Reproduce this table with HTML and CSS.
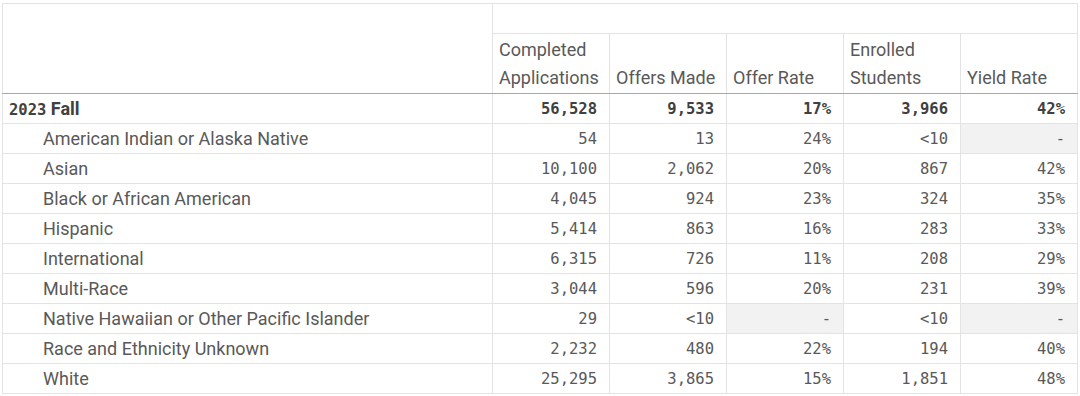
FILE: index.html
```html
<!DOCTYPE html>
<html lang="en">
<head>
    <meta charset="UTF-8">
    <title>Admissions by Race and Ethnicity</title>
    <link rel="stylesheet" href="styles.css">
</head>
<body>
    <table class="pivot">
        <colgroup>
            <col class="col-dim">
            <col class="col-num">
            <col class="col-num">
            <col class="col-num">
            <col class="col-num">
            <col class="col-num">
        </colgroup>
        <thead>
            <tr class="head-top">
                <th class="corner" rowspan="2"></th>
                <th class="head-span" colspan="5"></th>
            </tr>
            <tr class="head-measures">
                <th class="first-measure">Completed<br>Applications</th>
                <th>Offers Made</th>
                <th>Offer Rate</th>
                <th>Enrolled<br>Students</th>
                <th>Yield Rate</th>
            </tr>
        </thead>
        <tbody>
            <tr class="total">
                <td class="dim"><span class="num-font">2023</span> Fall</td>
                <td class="num first-measure">56,528</td>
                <td class="num">9,533</td>
                <td class="num">17%</td>
                <td class="num">3,966</td>
                <td class="num">42%</td>
            </tr>
            <tr>
                <td class="dim sub">American Indian or Alaska Native</td>
                <td class="num first-measure">54</td>
                <td class="num">13</td>
                <td class="num">24%</td>
                <td class="num">&lt;10</td>
                <td class="num null">-</td>
            </tr>
            <tr>
                <td class="dim sub">Asian</td>
                <td class="num first-measure">10,100</td>
                <td class="num">2,062</td>
                <td class="num">20%</td>
                <td class="num">867</td>
                <td class="num">42%</td>
            </tr>
            <tr>
                <td class="dim sub">Black or African American</td>
                <td class="num first-measure">4,045</td>
                <td class="num">924</td>
                <td class="num">23%</td>
                <td class="num">324</td>
                <td class="num">35%</td>
            </tr>
            <tr>
                <td class="dim sub">Hispanic</td>
                <td class="num first-measure">5,414</td>
                <td class="num">863</td>
                <td class="num">16%</td>
                <td class="num">283</td>
                <td class="num">33%</td>
            </tr>
            <tr>
                <td class="dim sub">International</td>
                <td class="num first-measure">6,315</td>
                <td class="num">726</td>
                <td class="num">11%</td>
                <td class="num">208</td>
                <td class="num">29%</td>
            </tr>
            <tr>
                <td class="dim sub">Multi-Race</td>
                <td class="num first-measure">3,044</td>
                <td class="num">596</td>
                <td class="num">20%</td>
                <td class="num">231</td>
                <td class="num">39%</td>
            </tr>
            <tr>
                <td class="dim sub">Native Hawaiian or Other Pacific Islander</td>
                <td class="num first-measure">29</td>
                <td class="num">&lt;10</td>
                <td class="num null">-</td>
                <td class="num">&lt;10</td>
                <td class="num null">-</td>
            </tr>
            <tr>
                <td class="dim sub">Race and Ethnicity Unknown</td>
                <td class="num first-measure">2,232</td>
                <td class="num">480</td>
                <td class="num">22%</td>
                <td class="num">194</td>
                <td class="num">40%</td>
            </tr>
            <tr>
                <td class="dim sub">White</td>
                <td class="num first-measure">25,295</td>
                <td class="num">3,865</td>
                <td class="num">15%</td>
                <td class="num">1,851</td>
                <td class="num">48%</td>
            </tr>
        </tbody>
    </table>
</body>
</html>
```

FILE: styles.css
```css
body {
    margin: 0;
    padding: 3px 0 0 2px;
    background: #ffffff;
    font-family: Roboto, "Liberation Sans", sans-serif;
    font-size: 18px;
    color: #595959;
}
.pivot {
    border-collapse: collapse;
    table-layout: fixed;
    width: 1075px;
}
.col-dim {
    width: 490px;
}
.col-num {
    width: 117px;
}
.pivot th,
.pivot td {
    border: 1px solid #e3e3e3;
    padding: 0 12px 0 6px;
    white-space: nowrap;
    line-height: 22px;
}
.head-top th {
    height: 29px;
}
.head-measures th {
    height: 58px;
    text-align: left;
    vertical-align: bottom;
    font-weight: normal;
    line-height: 28px;
    padding-bottom: 1px;
}
.pivot thead tr:last-child th,
.pivot thead .corner {
    border-bottom: 1px solid #a8a8a8;
}
.pivot .first-measure,
.pivot .head-span {
    border-left: 1px solid #9a9a9a;
}
.pivot tbody td {
    height: 28px;
    padding-top: 1px;
}
.dim {
    padding-left: 7px;
}
.dim.sub {
    padding-left: 40px;
}
.num {
    text-align: right;
    font-family: "DejaVu Sans Mono", "Liberation Mono", monospace;
    font-size: 15.5px;
}
.num-font {
    font-family: "DejaVu Sans Mono", "Liberation Mono", monospace;
    font-size: 15.5px;
}
.total td {
    font-weight: bold;
    color: #404040;
}
.null {
    background: #f2f2f2;
}
```
